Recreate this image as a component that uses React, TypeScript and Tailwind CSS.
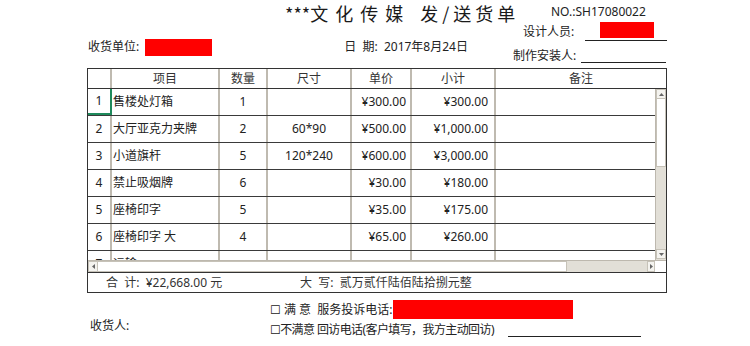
import React from "react";

const rows: string[][] = [
  ["1", "售楼处灯箱", "1", "", "¥300.00", "¥300.00"],
  ["2", "大厅亚克力夹牌", "2", "60*90", "¥500.00", "¥1,000.00"],
  ["3", "小道旗杆", "5", "120*240", "¥600.00", "¥3,000.00"],
  ["4", "禁止吸烟牌", "6", "", "¥30.00", "¥180.00"],
  ["5", "座椅印字", "5", "", "¥35.00", "¥175.00"],
  ["6", "座椅印字 大", "4", "", "¥65.00", "¥260.00"],
  ["7", "运输", "", "", "", ""],
];

const vline = "border-r-2 border-[#bfbab0]";

export default function App() {
  return (
    <div
      className="w-[750px] h-[346px] bg-white text-[#222] text-[12px] leading-none overflow-hidden"
      style={{ fontFamily: '"Noto Sans", "Noto Sans CJK SC", "DejaVu Sans", sans-serif' }}
    >
      <div className="ml-[87px] w-[580px]">
        {/* title row */}
        <div className="h-[24px] flex items-center">
          <div
            className="ml-[198px] w-[266px] pt-[2px] flex items-center text-[18px] leading-[22px] text-[#1a1a1a] whitespace-nowrap"
            style={{ fontFamily: '"Noto Sans CJK SC", "Noto Sans", sans-serif' }}
          >
            <span>***</span>
            <span className="tracking-[7px]">文化传媒</span>
            <span className="ml-[10px] tracking-[4px]">发/送货单</span>
          </div>
          <div className="text-[12px] leading-[20px] whitespace-nowrap">NO.:SH17080022</div>
        </div>

        {/* info block */}
        <div className="h-[44px] flex">
          <div className="flex items-center pt-[2px] w-[426px]">
            <span className="ml-[1px] whitespace-nowrap">收货单位:</span>
            <span className="ml-[6px] w-[67px] h-[17px] bg-[#ff0000]" />
            <span className="ml-[132px] whitespace-nowrap">日 &nbsp;期:&nbsp; 2017年8月24日</span>
          </div>
          <div className="flex flex-col w-[154px]">
            <div className="h-[17px] flex items-end">
              <span className="ml-[10px] w-[58px] pb-[3px] whitespace-nowrap">设计人员:</span>
              <div className="ml-[6px] w-[85px] h-[17px] border-b border-[#222] flex items-start">
                <span className="ml-[15px] -mt-[2px] w-[54px] h-[16px] bg-[#ff0000]" />
              </div>
            </div>
            <div className="h-[22px] flex items-end">
              <span className="w-[68px] pb-[1px] whitespace-nowrap">制作安装人:</span>
              <div className="w-[85px] h-[22px] border-b border-[#222]" />
            </div>
          </div>
        </div>

        {/* table */}
        <div className="border-t border-x border-[#333]">
          {/* header */}
          <div className="h-[20px] flex border-b border-[#333] text-[#333]">
            <div className={`w-[24px] ${vline}`} />
            <div className={`w-[108px] ${vline} flex items-center justify-center`}>项目</div>
            <div className={`w-[48px] ${vline} flex items-center justify-center`}>数量</div>
            <div className={`w-[84px] ${vline} flex items-center justify-center`}>尺寸</div>
            <div className={`w-[60px] ${vline} flex items-center justify-center`}>单价</div>
            <div className={`w-[84px] ${vline} flex items-center justify-center`}>小计</div>
            <div className="flex-1 flex items-center justify-center">备注</div>
          </div>
          {/* body */}
          <div className="flex h-[171px]">
            <div className="w-[567px] h-[171px] overflow-hidden">
              {rows.map((r, i) => (
                <div key={i} className="h-[27px] flex border-b border-[#3a3a3a]">
                  <div
                    className={`w-[24px] flex items-center justify-center ${
                      i === 0 ? "border-r-2 border-b-2 border-[#1f8a5c]" : vline
                    }`}
                  >
                    {r[0]}
                  </div>
                  <div className={`w-[108px] ${vline} flex items-center pl-[1px] whitespace-nowrap`}>{r[1]}</div>
                  <div className={`w-[48px] ${vline} flex items-center justify-center`}>{r[2]}</div>
                  <div className={`w-[84px] ${vline} flex items-center justify-center`}>{r[3]}</div>
                  <div className={`w-[60px] ${vline} flex items-center justify-end pr-[4px]`}>{r[4]}</div>
                  <div className={`w-[84px] ${vline} flex items-center justify-end pr-[6px]`}>{r[5]}</div>
                  <div className="flex-1" />
                </div>
              ))}
            </div>
            {/* vertical scrollbar */}
            <div className="w-[11px] h-[171px] flex flex-col bg-[#e2dfd7] border-l border-[#bdb8ae]">
              <div className="h-[10px] bg-[#f4f3ef] border border-[#c6c2b8] flex items-center justify-center">
                <svg width="5" height="3" viewBox="0 0 5 3"><path d="M0 3 L2.5 0 L5 3 Z" fill="#666" /></svg>
              </div>
              <div className="h-[68px] bg-white border-x border-b border-[#c6c2b8]" />
              <div className="flex-1" />
              <div className="h-[10px] mb-[1px] bg-[#f4f3ef] border border-[#c6c2b8] flex items-center justify-center">
                <svg width="5" height="3" viewBox="0 0 5 3"><path d="M0 0 L2.5 3 L5 0 Z" fill="#666" /></svg>
              </div>
            </div>
          </div>
          {/* horizontal scrollbar */}
          <div className="h-[13px] flex border-t border-[#bdb8ae] border-b border-b-[#333] bg-[#e2dfd7]">
            <div className="w-[10px] h-[11px] bg-[#f4f3ef] border border-[#c6c2b8] flex items-center justify-center">
              <svg width="3" height="5" viewBox="0 0 3 5"><path d="M3 0 L0 2.5 L3 5 Z" fill="#666" /></svg>
            </div>
            <div className="w-[469px] h-[11px] bg-white border-y border-r border-[#c6c2b8]" />
            <div className="w-[80px]" />
            <div className="w-[8px] h-[11px] bg-[#f4f3ef] border border-[#c6c2b8] flex items-center justify-center">
              <svg width="3" height="5" viewBox="0 0 3 5"><path d="M0 0 L3 2.5 L0 5 Z" fill="#666" /></svg>
            </div>
            <div className="flex-1 bg-white" />
          </div>
          {/* totals */}
          <div className="h-[20px] flex items-center border-b border-[#333] text-[#333]">
            <span className="ml-[18px] w-[194px] whitespace-nowrap">合 &nbsp;计:&nbsp; ¥22,668.00 元</span>
            <span className="whitespace-nowrap">大 &nbsp;写:&nbsp; 贰万贰仟陆佰陆拾捌元整</span>
          </div>
        </div>
      </div>

      {/* footer */}
      <div className="flex ml-[87px]">
        <div className="w-[183px] flex items-center pt-[20px]">
          <span className="ml-[3px]">收货人:</span>
        </div>
        <div className="flex flex-col">
          <div className="mt-[7px] h-[19px] flex items-center">
            <span className="whitespace-nowrap">☐ 满 意&nbsp; 服务投诉电话:</span>
            <span className="ml-[1px] w-[180px] h-[19px] bg-[#ff0000]" />
          </div>
          <div className="mt-[2px] h-[18px] flex items-center">
            <span className="w-[238px] whitespace-nowrap tracking-[-0.6px]">☐不满意 回访电话(客户填写，我方主动回访)</span>
            <span className="w-[133px] h-[14px] border-b border-[#222]" />
          </div>
        </div>
      </div>
    </div>
  );
}
